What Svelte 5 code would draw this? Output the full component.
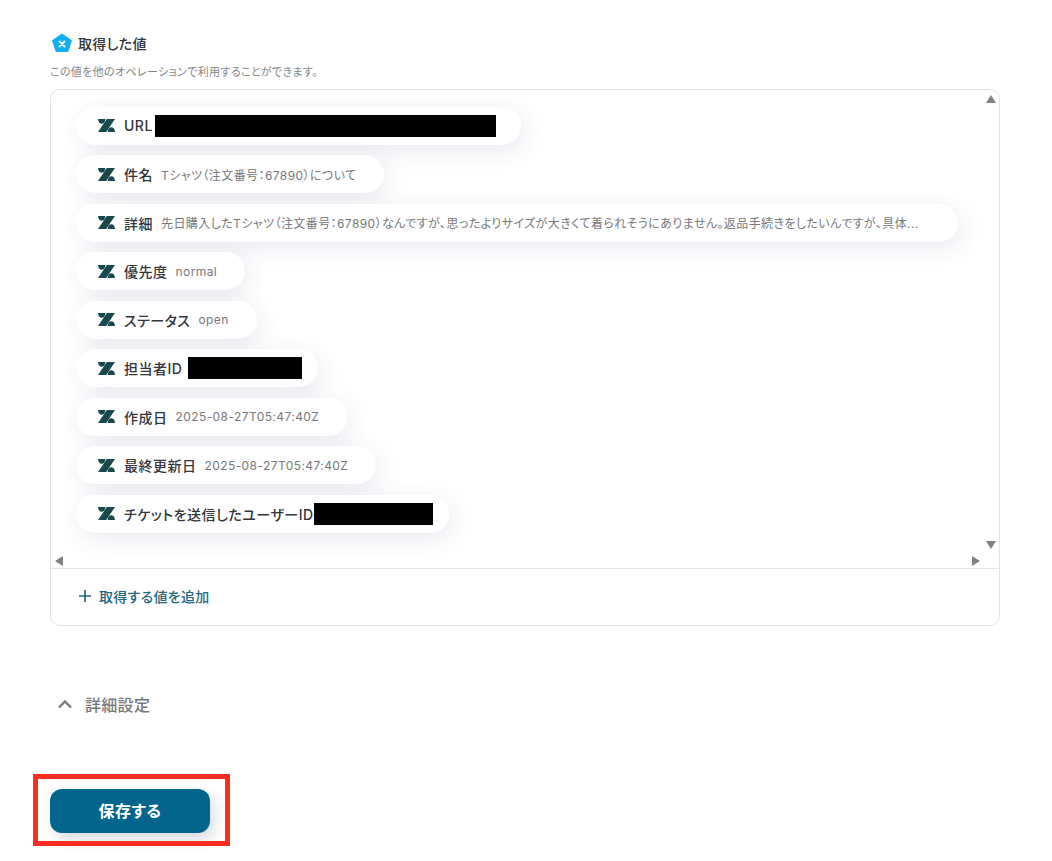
<script lang="ts">
	type Row = { label: string; value?: string; black?: number; gap?: number; pad?: number };

	const rows: Row[] = [
		{ label: 'URL', black: 341, gap: 2, pad: 25 },
		{ label: '件名', value: 'Tシャツ（注文番号：67890）について' },
		{ label: '詳細', value: '先日購入したTシャツ（注文番号：67890）なんですが、思ったよりサイズが大きくて着られそうにありません。返品手続きをしたいんですが、具体...', pad: 39 },
		{ label: '優先度', value: 'normal' },
		{ label: 'ステータス', value: 'open' },
		{ label: '担当者ID', black: 114, gap: 6, pad: 16 },
		{ label: '作成日', value: '2025-08-27T05:47:40Z' },
		{ label: '最終更新日', value: '2025-08-27T05:47:40Z' },
		{ label: 'チケットを送信したユーザーID', black: 119, gap: 0, pad: 16 }
	];
</script>

<main class="page">
	<div class="heading">
		<svg class="badge" width="22" height="20" viewBox="0 0 22 20">
			<path d="M11 0.5 L20.5 7 Q21 7.5 20.8 8.2 L17.5 18 Q17.2 19 16 19 H6 Q4.8 19 4.5 18 L1.2 8.2 Q1 7.5 1.5 7 Z" fill="#0fb0f2" />
			<path d="M8.5 8.5 L13.5 13.5 M13.5 8.5 L8.5 13.5" stroke="#fff" stroke-width="1.8" stroke-linecap="round" />
		</svg>
		<span>取得した値</span>
	</div>
	<p class="hint">この値を他のオペレーションで利用することができます。</p>

	<section class="panel">
		<div class="scroll">
			<div class="list">
				{#each rows as row}
					<div class="pill" style="padding-right: {row.pad ?? 28}px">
						<svg class="zd" width="17" height="13" viewBox="0 0 17 13">
							<path d="M0 0 H7.4 Q7 4.6 3.7 4.8 Q0.4 4.6 0 0 Z" fill="#17494d" />
							<path d="M8.8 0 H17 L8.2 13 H0 Z" fill="#17494d" />
							<path d="M9.6 13 H17 Q16.6 8.4 13.3 8.2 Q10 8.4 9.6 13 Z" fill="#17494d" />
						</svg>
						<span class="label">{row.label}</span>
						{#if row.black}
							<span class="redact" style="width: {row.black}px; margin-left: {row.gap}px"></span>
						{:else}
							<span class="value">{row.value}</span>
						{/if}
					</div>
				{/each}
			</div>
			<i class="arrow up"></i>
			<i class="arrow down"></i>
			<i class="arrow left"></i>
			<i class="arrow right"></i>
		</div>
		<div class="add">
			<svg width="14" height="14" viewBox="0 0 14 14">
				<path d="M7 1 V13 M1 7 H13" stroke="#22667f" stroke-width="1.7" />
			</svg>
			<span>取得する値を追加</span>
		</div>
	</section>

	<div class="advanced">
		<svg width="16" height="10" viewBox="0 0 16 10">
			<path d="M2 8.5 L8 2.5 L14 8.5" fill="none" stroke="#7a7a7f" stroke-width="2.4" />
		</svg>
		<span>詳細設定</span>
	</div>

	<div class="footer">
		<button type="button">保存する</button>
		<div class="mark"></div>
	</div>
</main>

<style>
	:global(body) {
		margin: 0;
		background: #fff;
	}
	.page {
		width: 1052px;
		height: 861px;
		box-sizing: border-box;
		padding: 32px 52px 0 50px;
		font-family: Inter, 'Noto Sans CJK JP', 'Noto Sans', sans-serif;
		font-feature-settings: 'palt';
		color: #2e2e33;
		overflow: hidden;
	}
	.heading {
		display: flex;
		align-items: center;
		gap: 5px;
		height: 22px;
		padding-left: 1px;
		font-size: 14px;
		font-weight: 500;
		letter-spacing: 0.3px;
		color: #333;
	}
	.hint {
		margin: 11px 0 0;
		font-size: 11px;
		line-height: 15px;
		letter-spacing: 0.35px;
		color: #85858a;
	}
	.panel {
		margin-top: 9px;
		border: 1px solid #e2e2e6;
		border-radius: 10px;
		height: 537px;
		box-sizing: border-box;
		overflow: hidden;
		display: flex;
		flex-direction: column;
	}
	.scroll {
		position: relative;
		height: 479px;
		flex: none;
		border-bottom: 1px solid #e4e4e8;
		box-sizing: border-box;
		overflow: hidden;
	}
	.list {
		display: flex;
		flex-direction: column;
		align-items: flex-start;
		gap: 10.5px;
		padding: 16.6px 0 0 25px;
	}
	.pill {
		display: flex;
		align-items: center;
		height: 38px;
		box-sizing: border-box;
		padding-left: 22px;
		border-radius: 19px;
		background: #fff;
		box-shadow: 4px 6px 24px rgba(60, 50, 110, 0.11);
		white-space: nowrap;
	}
	.zd {
		flex: none;
		margin-right: 9px;
	}
	.label {
		font-size: 14px;
		font-weight: 500;
		letter-spacing: 0.5px;
		color: #33333a;
	}
	.value {
		margin-left: 8px;
		font-size: 12px;
		letter-spacing: 0.42px;
		color: #77777c;
	}
	.redact {
		display: block;
		height: 22px;
		background: #000;
	}
	.arrow {
		position: absolute;
		width: 0;
		height: 0;
		border: 5px solid transparent;
	}
	.up {
		top: 5px;
		right: 3px;
		border-top: 0;
		border-bottom: 8px solid #808085;
	}
	.down {
		top: 451px;
		right: 3px;
		border-bottom: 0;
		border-top: 8px solid #808085;
	}
	.left {
		top: 466px;
		left: 4px;
		border-left: 0;
		border-right: 8px solid #808085;
	}
	.right {
		top: 466px;
		left: 921px;
		border-right: 0;
		border-left: 8px solid #808085;
	}
	.add {
		display: flex;
		align-items: center;
		gap: 7px;
		padding: 17px 0 0 27px;
		font-size: 14px;
		font-weight: 500;
		letter-spacing: 0.3px;
		color: #22667f;
	}
	.advanced {
		display: flex;
		align-items: center;
		gap: 12px;
		margin: 67px 0 0 7px;
		height: 22px;
		font-size: 16px;
		font-weight: 500;
		letter-spacing: 0.3px;
		color: #77777c;
	}
	.footer {
		position: relative;
		margin-top: 74px;
	}
	button {
		display: block;
		width: 160px;
		height: 44px;
		padding: 0 0 2px;
		border: none;
		border-radius: 12px;
		background: #03658c;
		color: #fff;
		font-family: inherit;
		font-feature-settings: inherit;
		font-size: 16px;
		font-weight: 700;
		letter-spacing: 0.5px;
		box-shadow: 4px 6px 14px rgba(60, 70, 110, 0.2);
	}
	.mark {
		position: absolute;
		left: -17px;
		top: -15px;
		width: 197px;
		height: 72px;
		box-sizing: border-box;
		border: 5px solid #ff2d20;
	}
</style>
